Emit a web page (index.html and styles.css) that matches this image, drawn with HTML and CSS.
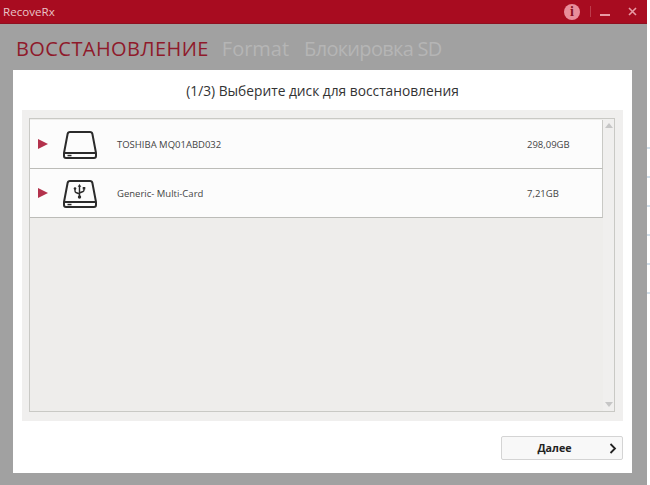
FILE: index.html
```html
<!DOCTYPE html>
<html lang="ru">
<head>
<meta charset="utf-8">
<title>RecoveRx</title>
<link rel="stylesheet" href="styles.css">
</head>
<body>
<div class="page">
<div class="app">
  <header class="titlebar">
    <span class="app-name">RecoveRx</span>
    <div class="controls">
      <span class="info">i</span>
      <span class="sep"></span>
      <span class="min"></span>
      <svg class="close" width="9" height="9" viewBox="0 0 9 9"><path d="M1 1l7 7M8 1l-7 7" stroke="#e89aa4" stroke-width="1.6" fill="none"/></svg>
    </div>
  </header>
  <main class="content">
    <nav class="tabs">
      <span class="tab active">ВОССТАНОВЛЕНИЕ</span>
      <span class="tab">Format</span>
      <span class="tab lock">Блокировка SD</span>
    </nav>
    <section class="card">
      <h1 class="heading">(1/3) Выберите диск для восстановления</h1>
      <div class="well">
        <div class="listbox">
          <div class="rows">
            <div class="row">
              <span class="arrow"></span>
              <svg class="disk" width="34" height="30" viewBox="0 0 34 30"><g fill="none" stroke="#2b2b2b" stroke-width="2" stroke-linejoin="round"><path d="M7 3h20q2 0 2.400 2L33 24v3q0 2-2 2H3q-2 0-2-2v-3L4.600 5q.4-2 2.400-2z"/><path d="M1 24h32"/></g><path d="M4.500 25.800h4v1.500h-4z" fill="#2b2b2b"/></svg>
              <span class="name">TOSHIBA MQ01ABD032</span>
              <span class="size">298,09GB</span>
            </div>
            <div class="row">
              <span class="arrow"></span>
              <svg class="disk" width="34" height="30" viewBox="0 0 34 30"><g fill="none" stroke="#2b2b2b" stroke-width="2" stroke-linejoin="round"><path d="M7 3h20q2 0 2.400 2L33 24v3q0 2-2 2H3q-2 0-2-2v-3L4.600 5q.4-2 2.400-2z"/><path d="M1 24h32"/></g><path d="M4.500 25.800h4v1.500h-4z" fill="#2b2b2b"/><g fill="none" stroke="#2b2b2b" stroke-width="1.400"><path d="M16.500 8v11M12 11v2q0 1 1 1.500l3.500 1.500M21 11v1q0 1-1 1.500l-3.500 1.500"/></g><path d="M16.500 6l-1.800 2.800h3.600z" fill="#2b2b2b"/><circle cx="16.500" cy="19" r="1.700" fill="#2b2b2b"/><circle cx="12" cy="10.500" r="1.300" fill="#2b2b2b"/><path d="M19.700 9h2.600v2.400h-2.600z" fill="#2b2b2b"/></svg>
              <span class="name">Generic- Multi-Card</span>
              <span class="size">7,21GB</span>
            </div>
          </div>
          <div class="scrollbar">
            <span class="thumb up"></span>
            <span class="thumb down"></span>
          </div>
        </div>
      </div>
      <div class="actions">
        <button class="next" type="button">
          <span class="next-label">Далее</span>
          <svg class="chev" width="8" height="11" viewBox="0 0 8 11"><path d="M1.500 1l4.500 4.500L1.500 10" fill="none" stroke="#222" stroke-width="1.800"/></svg>
        </button>
      </div>
    </section>
  </main>
</div>
<aside class="edge">
  <span class="mark"></span><span class="mark"></span><span class="mark"></span><span class="mark"></span><span class="mark"></span><span class="mark"></span>
</aside>
</div>
</body>
</html>
```

FILE: styles.css
```css
* { box-sizing: border-box; }
html, body { margin: 0; height: 100%; background: #fff; overflow: hidden; }
body { font-family: "Open Sans", "Noto Sans", sans-serif; }

.page { display: flex; width: 650px; height: 485px; }

.app {
  width: 647px;
  height: 485px;
  flex: none;
  display: flex;
  flex-direction: column;
  background: #a1a1a1;
}

.edge {
  flex: 1;
  display: flex;
  flex-direction: column;
  gap: 27px;
  padding-top: 147px;
}
.mark { height: 2px; background: #d5e2ec; }

.titlebar {
  height: 24px;
  flex: none;
  display: flex;
  align-items: center;
  justify-content: space-between;
  padding: 0 10px 0 3px;
  background: #a80c20;
  border-bottom: 1px solid #8e1020;
}
.app-name { font-size: 11.6px; color: #e9c4c8; }
.controls { display: flex; align-items: center; }
.info {
  width: 16px;
  height: 16px;
  border-radius: 50%;
  background: #e98d9a;
  color: #8a1122;
  font: bold 14px/16px "Liberation Serif", serif;
  text-align: center;
}
.sep { width: 1px; height: 11px; margin: 0 9px 0 10px; background: #bd3c4c; }
.min { width: 10px; height: 2px; margin: 6px 18px 0 0; background: #e89aa4; }

.content { flex: 1; display: flex; flex-direction: column; padding: 0 15px 12px 13px; }

.tabs {
  height: 46px;
  flex: none;
  display: flex;
  align-items: center;
  gap: 13px;
  padding: 2px 0 0 3px;
}
.tab { font-size: 20px; color: #b5b5b5; white-space: nowrap; }
.tab.active { color: #8f1a2b; letter-spacing: 0.43px; }
.tab.lock { margin-left: 2px; letter-spacing: -0.7px; }

.card {
  flex: 1;
  display: flex;
  flex-direction: column;
  background: #fff;
  padding: 0 9px;
}
.heading {
  height: 42px;
  margin: 0;
  padding-bottom: 1px;
  display: flex;
  align-items: center;
  justify-content: center;
  font-size: 13.75px;
  font-weight: 400;
  color: #333;
}
.well { height: 311px; margin-top: -2px; flex: none; background: #f0efee; padding: 8px 8px 9px 7px; }
.listbox {
  height: 100%;
  display: flex;
  background: #eeedeb;
  border: 1px solid #c9c9c5;
}
.rows { flex: 1; padding-top: 1px; }
.row {
  height: 49px;
  display: flex;
  align-items: center;
  background: #fcfcfc;
  border-bottom: 1px solid #bcbcb8;
  border-right: 1px solid #c9c9c5;
  padding-left: 8px;
  color: #444;
  font-size: 9.5px;
}
.arrow {
  width: 0;
  height: 0;
  border-left: 10px solid #b3324c;
  border-top: 5px solid transparent;
  border-bottom: 5px solid transparent;
}
.disk { margin-left: 15px; }
.name { margin-left: 20px; flex: 1; }
.size { width: 75px; }

.scrollbar {
  width: 11px;
  flex: none;
  display: flex;
  flex-direction: column;
  justify-content: space-between;
  align-items: center;
  padding: 4px 0;
  background: #f0efee;
}
.thumb { width: 0; height: 0; border-left: 4px solid transparent; border-right: 4px solid transparent; }
.thumb.up { border-bottom: 5px solid #c6c6c6; }
.thumb.down { border-top: 5px solid #c6c6c6; }

.actions { flex: 1; display: flex; justify-content: flex-end; align-items: flex-start; padding-top: 15px; }
.next {
  width: 122px;
  height: 24px;
  display: flex;
  align-items: center;
  padding: 0 5px 0 0;
  background: #f8f8f8;
  border: 1px solid #d4d4d4;
  border-radius: 2px;
  font: 700 10.7px "Open Sans", sans-serif;
  color: #222;
}
.next-label { flex: 1; text-align: center; padding-right: 2px; }
```
